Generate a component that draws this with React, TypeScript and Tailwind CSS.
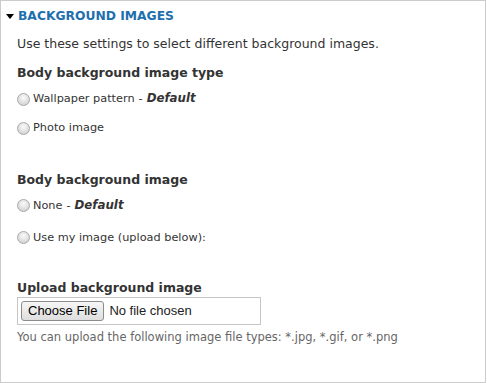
import React from "react";

function Radio({ label, def }: { label: string; def?: boolean }) {
  return (
    <div className="flex items-center h-[12px]">
      <span className="w-[13px] h-[13px] rounded-full border border-[#a8a8a8] bg-[radial-gradient(circle_at_50%_35%,#fbfbfb_0%,#dddddd_60%,#c9c9c9_100%)] shrink-0" />
      <span className="ml-[3px] text-[11.3px] text-[#333] leading-none whitespace-nowrap">
        {label}
        {def && (
          <>
            <span className="mx-[4px]">-</span>
            <em className="font-bold italic text-[11.8px]">Default</em>
          </>
        )}
      </span>
    </div>
  );
}

export default function App() {
  return (
    <div className="w-[487px] h-[383px] bg-white" style={{ fontFamily: '"DejaVu Sans", Verdana, sans-serif' }}>
      <div className="w-[486px] h-[383px] border border-[#cccccc] pl-[16px] pt-[8px]">
        <div className="flex items-center h-[15px]">
          <span className="w-0 h-0 border-l-[4px] border-r-[4px] border-t-[5px] border-l-transparent border-r-transparent border-t-black ml-[-11px] mr-[4px]" />
          <span className="text-[12.3px] font-bold text-[#1d6fae] leading-none">BACKGROUND IMAGES</span>
        </div>
        <p className="mt-[14px] text-[12.5px] text-[#333] leading-none">Use these settings to select different background images.</p>
        <h3 className="mt-[16px] text-[12.5px] font-bold text-[#333] leading-none">Body background image type</h3>
        <div className="mt-[14px]"><Radio label="Wallpaper pattern" def /></div>
        <div className="mt-[17px]"><Radio label="Photo image" /></div>
        <h3 className="mt-[40px] text-[12.5px] font-bold text-[#333] leading-none">Body background image</h3>
        <div className="mt-[13px]"><Radio label="None" def /></div>
        <div className="mt-[20px]"><Radio label="Use my image (upload below):" /></div>
        <h3 className="mt-[38px] text-[12.5px] font-bold text-[#333] leading-none">Upload background image</h3>
        <div className="mt-[3px] w-[244px] h-[28px] border border-[#c6c6c6] flex items-center pl-[3px]" style={{ fontFamily: '"Liberation Sans", Arial, sans-serif' }}>
          <span className="h-[20px] px-[6px] border border-[#8c8c8c] rounded-[3px] bg-[linear-gradient(#f6f6f6,#dedede)] text-[13px] text-black flex items-center">Choose File</span>
          <span className="ml-[5px] text-[13px] text-[#222]">No file chosen</span>
        </div>
        <p className="mt-[7px] text-[11.5px] text-[#666] leading-none">You can upload the following image file types: *.jpg, *.gif, or *.png</p>
      </div>
    </div>
  );
}
